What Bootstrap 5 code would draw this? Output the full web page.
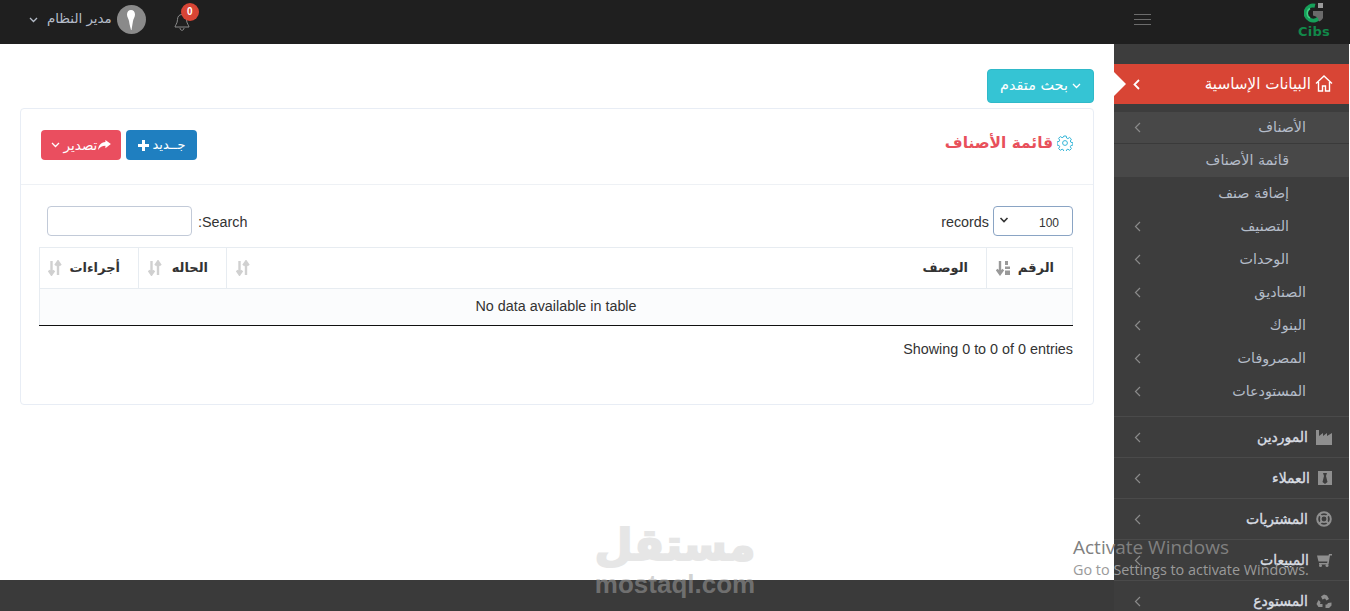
<!DOCTYPE html>
<html lang="ar">
<head>
<meta charset="utf-8">
<title>قائمة الأصناف</title>
<link href="https://cdn.jsdelivr.net/npm/bootstrap@5.3.0/dist/css/bootstrap.min.css" rel="stylesheet">
<style>
html,body{height:611px;overflow:hidden;background:#fff}
body{font-family:"DejaVu Sans","Liberation Sans",sans-serif;font-size:13px;color:#333;position:relative}
.lat{font-family:"Liberation Sans",sans-serif;font-size:14.35px;color:#333}
.topbar{height:44px;background:#1f1f1f;padding-bottom:5px}
.user-area{padding-left:29px;width:210px}
.user-name{color:#b4bcc8;font-size:13.4px;margin:0 5px 0 9px}
.avatar{width:29px;height:29px;border-radius:50%;background:#8a8a8a}
.bell-wrap{position:relative;width:16px;height:18px;margin-left:28px;top:2px}
.bell-count{position:absolute;left:7px;top:-10px;width:18px;height:18px;border-radius:50%;background:#d84535;color:#fff;font:700 10px/18px "Liberation Sans",sans-serif;text-align:center}
.top-right{width:236px;padding:0 19px 0 20px}
.burger{width:17px}
.burger i{display:block;height:1px;background:#6c6c6c;margin-bottom:4px}
.logo-box{width:34px;text-align:center;line-height:1}
.logo-word{font:700 13px/11px "DejaVu Sans",sans-serif;color:#12884a;letter-spacing:.2px;display:block;margin-top:3px}
.body-row{height:567px}
.content-col{width:1114px;flex:0 0 1114px}
.page-area{height:536px;padding:25px 20px 0}
.page-foot{height:31px;background:#3a3a3a}
.btn-adv{background:#35c4d4;border:1px solid #2fb9c9;color:#fff;width:107px;height:34px;font-size:14.4px;padding:0;border-radius:4px}
.sheet{margin-top:5px;height:297px;border:1px solid #e8edf5;border-radius:4px}
.sheet-head{height:76px;border-bottom:1px solid #eef1f5;padding:21px 20px 0}
.act-btn{height:30px;border:0;border-radius:4px;color:#fff;font-size:13px;padding:0;display:inline-flex;align-items:center;justify-content:center;gap:4px}
.act-red{width:80px;background:#ea4e5f;font-size:13.5px}
.act-blue{width:71px;background:#1f7fc0;margin-left:5px}
.arrow-over{margin-left:-3px}
.sheet-title{color:#e8505b;font-weight:700;font-size:15.4px;margin-top:2px;margin-right:4px}
.ctrl-row{padding:21px 20px 0 26px;height:62px}
.ctrl-label{margin-top:6px}
.search-label{margin-left:6px}
.txt-box{width:145px;height:30px;border:1px solid #c2cad8;border-radius:4px;background:#fff}
.sel-box{width:80px;height:30px;border:1px solid #8aa4c4;border-radius:4px;padding:0 13px 0 5px;font:12px/33px "Liberation Sans",sans-serif;color:#333}
.grid-wrap{margin:0 20px 0 18px}
.grid{width:1033px;table-layout:fixed;border-collapse:collapse;direction:rtl;margin:0}
.grid th{height:41px;border:1px solid #e7ecf1;font-size:13px;font-weight:700;color:#333;padding:0 18px 0 9px;white-space:nowrap}
.grid th.th-first{padding:0 18px 0 9px}
.grid th.th-last{padding:0 18px 0 8px}
.grid td{height:37px;text-align:center;background:#fbfcfd;border-left:1px solid #e7ecf1;border-right:1px solid #e7ecf1;border-bottom:1px solid #111;padding:0}
.sort-ic{display:block}
.info-line{padding:13px 20px 0 0;text-align:right}
.side{width:235px;flex:0 0 235px;background:#3d3d3d;padding-top:20px}
.s-active{height:40px;background:#d84535;color:#fff;font-size:15.2px;position:relative;padding:0 16px 0 19px}
.s-active::before{content:"";position:absolute;left:0;top:8px;border-left:12px solid #fff;border-top:12px solid transparent;border-bottom:12px solid transparent}
.s-sub{margin-top:8px;padding-bottom:8px;border-bottom:1px solid #4a4a4a}
.s-sub-row{height:33px;color:#b4bcc8;font-size:14.3px;padding:0 43px 0 20px}
.s-sub-row.s-l2{padding-right:60px}
.s-first{background:#484848;border-bottom:1px solid #3a3a3a;height:32px}
.s-cur{background:#484848}
.s-main{height:41px;border-bottom:1px solid #4a4a4a;color:#d9dde3;font-size:14px;padding:0 17px 0 20px;-webkit-text-stroke:.35px #d9dde3}
.s-main svg.ic{margin-left:8px}
.wm{position:absolute;left:594px;top:518px;width:162px;text-align:center;pointer-events:none}
.wm-ar{font:700 44px/54px "DejaVu Sans",sans-serif;display:block;color:#e6e6e6;-webkit-text-stroke:2px #e6e6e6}
.wm-en{font:700 26px/24px "Liberation Sans",sans-serif;display:block;color:rgba(165,165,165,.5)}
.win-mark{position:absolute;left:1073px;top:535px;font-family:"Open Sans",sans-serif;color:#808080;pointer-events:none;white-space:nowrap}
.win-a{font-size:19px;line-height:25px}
.win-b{font-size:14.4px;line-height:20px;color:#9a9a9a}
</style>
</head>
<body>
<header class="topbar d-flex align-items-center justify-content-between">
  <div class="user-area d-flex align-items-center">
    <svg width="9" height="6" viewBox="0 0 9 6"><path d="M1 1l3.500 3.500L8 1" fill="none" stroke="#b4bcc8" stroke-width="1.300"/></svg>
    <span class="user-name">مدير النظام</span>
    <span class="avatar d-flex align-items-center justify-content-center">
      <svg width="10" height="20" viewBox="0 0 10 20"><path d="M5 0c2.500 0 4 1.800 4 4.500 0 2.500-1.500 4-2 6.500L5.500 20 5 20 3.500 14 3 11C2.500 8.500 1 7 1 4.500 1 1.800 2.500 0 5 0z" fill="#fff"/></svg>
    </span>
    <span class="bell-wrap">
      <svg width="16" height="18" viewBox="0 0 16 18" class="d-block"><path d="M8 1.500c-3 0-4.500 2.300-4.500 5 0 4-2.500 6-2.500 7.500h14c0-1.500-2.500-3.500-2.500-7.500 0-2.700-1.500-5-4.500-5zM6 15c0 1.500 1 2.300 2 2.300s2-.8 2-2.300" fill="none" stroke="#8b8b8b" stroke-width="1"/></svg>
      <span class="bell-count">0</span>
    </span>
  </div>
  <div class="top-right d-flex align-items-center justify-content-between">
    <div class="burger"><i></i><i></i><i class="mb-0"></i></div>
    <div class="logo-box">
      <svg width="20" height="20" viewBox="0 0 20 20" class="d-block mx-auto"><path d="M11 2.800A7.500 7.500 0 1 0 15.500 14" fill="none" stroke="#16a05a" stroke-width="4"/><path d="M6 5.500A5.500 5.500 0 0 0 6 15" fill="none" stroke="#3fd083" stroke-width="1.500"/><rect x="14" y="0" width="5" height="5" fill="#9a9a9a"/><path d="M9 8h10v7c-1 2-2.500 3-4 3.500-.5-3-1.500-5-6-6z" fill="#6a6a6a"/></svg>
      <span class="logo-word">Cibs</span>
    </div>
  </div>
</header>

<div class="body-row d-flex">
  <div class="content-col d-flex flex-column">
    <main class="page-area">
      <div class="d-flex justify-content-end">
        <button class="btn-adv d-inline-flex align-items-center justify-content-center gap-1" type="button">
          <span>بحث متقدم</span>
          <svg width="9" height="6" viewBox="0 0 9 6"><path d="M1 1l3.500 3.500L8 1" fill="none" stroke="#fff" stroke-width="1.300"/></svg>
        </button>
      </div>
      <section class="sheet">
        <div class="sheet-head d-flex justify-content-between align-items-start">
          <div class="d-flex">
            <button class="act-btn act-red" type="button">
              <svg width="9" height="6" viewBox="0 0 9 6"><path d="M1 1l3.500 3.500L8 1" fill="none" stroke="#fff" stroke-width="1.300"/></svg>
              <span>تصدير</span>
              <svg width="13" height="10" viewBox="0 0 14 11" class="arrow-over"><path d="M8 0l6 4.500L8 9V6.300C4.500 6.300 2 7.500 0 11c.3-5 3-8.200 8-8.700z" fill="#fff"/></svg>
            </button>
            <button class="act-btn act-blue" type="button">
              <svg width="11" height="11" viewBox="0 0 11 11"><path d="M4 0h3v4h4v3H7v4H4V7H0V4h4z" fill="#fff"/></svg>
              <span>جــديد</span>
            </button>
          </div>
          <div class="d-flex align-items-center">
            <span class="sheet-title">قائمة الأصناف</span>
            <svg width="16" height="16" viewBox="0 0 16 16"><g fill="none" stroke="#35b6d8" stroke-width="1"><circle cx="8" cy="8" r="2.400"/><path d="M6.800 1h2.400l.4 2 1.300.6 1.800-1.100 1.700 1.700-1.100 1.800.6 1.300 2 .4v2.400l-2 .4-.6 1.300 1.100 1.800-1.700 1.700-1.800-1.100-1.300.6-.4 2H6.800l-.4-2-1.300-.6-1.800 1.100-1.700-1.700 1.100-1.800-.6-1.300-2-.4V6.800l2-.4.6-1.300-1.100-1.800 1.700-1.700 1.800 1.100 1.300-.6z"/></g></svg>
          </div>
        </div>
        <div class="ctrl-row d-flex justify-content-between">
          <div class="d-flex lat">
            <div class="txt-box"></div>
            <span class="ctrl-label search-label">:Search</span>
          </div>
          <div class="d-flex lat">
            <span class="me-1 ctrl-label">records</span>
            <div class="sel-box d-flex justify-content-between">
              <svg width="10" height="28" viewBox="0 0 10 28"><path d="M1.500 11l3.500 3.500L8.500 11" fill="none" stroke="#333" stroke-width="1.600"/></svg>
              <span>100</span>
            </div>
          </div>
        </div>
        <div class="grid-wrap">
          <table class="grid">
            <colgroup><col style="width:86px"><col style="width:760px"><col style="width:88px"><col style="width:99px"></colgroup>
            <thead>
              <tr>
                <th class="th-first"><div class="d-flex justify-content-between align-items-center"><span>الرقم</span><svg width="15" height="16" viewBox="0 0 15 16" class="sort-ic"><path d="M4 1v12M.8 9.500L4 14l3.200-4.500" fill="none" stroke="#999" stroke-width="2.400"/><path d="M9 1h3v4H9zM9 6.500h5V9H9zM9 10.500h5V15H9z" fill="#999"/></svg></div></th>
                <th><div class="d-flex justify-content-between align-items-center"><span>الوصف</span><svg width="14" height="16" viewBox="0 0 14 16" class="sort-ic"><path d="M3.500 1v13M.8 10.500L3.500 14.500l2.700-4M10 15V2M7.300 5.500L10 1.500l2.700 4" fill="none" stroke="#d0d0d0" stroke-width="2.400"/></svg></div></th>
                <th><div class="d-flex justify-content-between align-items-center"><span>الحاله</span><svg width="14" height="16" viewBox="0 0 14 16" class="sort-ic"><path d="M3.500 1v13M.8 10.500L3.500 14.500l2.700-4M10 15V2M7.300 5.500L10 1.500l2.700 4" fill="none" stroke="#d0d0d0" stroke-width="2.400"/></svg></div></th>
                <th class="th-last"><div class="d-flex justify-content-between align-items-center"><span>أجراءات</span><svg width="14" height="16" viewBox="0 0 14 16" class="sort-ic"><path d="M3.500 1v13M.8 10.500L3.500 14.500l2.700-4M10 15V2M7.300 5.500L10 1.500l2.700 4" fill="none" stroke="#d0d0d0" stroke-width="2.400"/></svg></div></th>
              </tr>
            </thead>
            <tbody><tr><td colspan="4" class="lat">No data available in table</td></tr></tbody>
          </table>
        </div>
        <div class="info-line lat">Showing 0 to 0 of 0 entries</div>
      </section>
    </main>
    <div class="page-foot"></div>
  </div>

  <nav class="side" dir="rtl">
    <div class="s-active d-flex align-items-center justify-content-between">
      <span class="d-flex align-items-center">
        <svg width="18" height="17" viewBox="0 0 18 17" class="ms-1"><path d="M1 8.500L9 1l8 7.500M3.500 7v9h4v-5h3v5h4V7" fill="none" stroke="#fff" stroke-width="1.400"/></svg>
        <span>البيانات الإساسية</span>
      </span>
      <svg width="7" height="11" viewBox="0 0 7 11"><path d="M6 1L1.500 5.500 6 10" fill="none" stroke="#fff" stroke-width="1.800"/></svg>
    </div>
    <div class="s-sub">
      <div class="s-sub-row s-first d-flex align-items-center justify-content-between"><span>الأصناف</span><svg width="7" height="11" viewBox="0 0 7 11"><path d="M6 1L1.500 5.500 6 10" fill="none" stroke="#8a8a8a" stroke-width="1.200"/></svg></div>
      <div class="s-sub-row s-l2 s-cur d-flex align-items-center"><span>قائمة الأصناف</span></div>
      <div class="s-sub-row s-l2 d-flex align-items-center"><span>إضافة صنف</span></div>
      <div class="s-sub-row s-l2 d-flex align-items-center justify-content-between"><span>التصنيف</span><svg width="7" height="11" viewBox="0 0 7 11"><path d="M6 1L1.500 5.500 6 10" fill="none" stroke="#8a8a8a" stroke-width="1.200"/></svg></div>
      <div class="s-sub-row s-l2 d-flex align-items-center justify-content-between"><span>الوحدات</span><svg width="7" height="11" viewBox="0 0 7 11"><path d="M6 1L1.500 5.500 6 10" fill="none" stroke="#8a8a8a" stroke-width="1.200"/></svg></div>
      <div class="s-sub-row d-flex align-items-center justify-content-between"><span>الصناديق</span><svg width="7" height="11" viewBox="0 0 7 11"><path d="M6 1L1.500 5.500 6 10" fill="none" stroke="#8a8a8a" stroke-width="1.200"/></svg></div>
      <div class="s-sub-row d-flex align-items-center justify-content-between"><span>البنوك</span><svg width="7" height="11" viewBox="0 0 7 11"><path d="M6 1L1.500 5.500 6 10" fill="none" stroke="#8a8a8a" stroke-width="1.200"/></svg></div>
      <div class="s-sub-row d-flex align-items-center justify-content-between"><span>المصروفات</span><svg width="7" height="11" viewBox="0 0 7 11"><path d="M6 1L1.500 5.500 6 10" fill="none" stroke="#8a8a8a" stroke-width="1.200"/></svg></div>
      <div class="s-sub-row d-flex align-items-center justify-content-between"><span>المستودعات</span><svg width="7" height="11" viewBox="0 0 7 11"><path d="M6 1L1.500 5.500 6 10" fill="none" stroke="#8a8a8a" stroke-width="1.200"/></svg></div>
    </div>
    <div class="s-main d-flex align-items-center justify-content-between">
      <span class="d-flex align-items-center"><svg class="ic" width="16" height="15" viewBox="0 0 16 15"><path d="M0 0h3v6l4-3v3l4-3v3l5-3v12H0z" fill="#8f8f8f"/></svg><span>الموردين</span></span>
      <svg width="7" height="11" viewBox="0 0 7 11"><path d="M6 1L1.500 5.500 6 10" fill="none" stroke="#8a8a8a" stroke-width="1.200"/></svg>
    </div>
    <div class="s-main d-flex align-items-center justify-content-between">
      <span class="d-flex align-items-center"><svg class="ic" width="14" height="14" viewBox="0 0 14 14"><rect width="14" height="14" fill="#8f8f8f"/><path d="M5 2h4L8 5l1.500 6L7 13l-2.500-2L6 5z" fill="#3d3d3d"/></svg><span>العملاء</span></span>
      <svg width="7" height="11" viewBox="0 0 7 11"><path d="M6 1L1.500 5.500 6 10" fill="none" stroke="#8a8a8a" stroke-width="1.200"/></svg>
    </div>
    <div class="s-main d-flex align-items-center justify-content-between">
      <span class="d-flex align-items-center"><svg class="ic" width="16" height="16" viewBox="0 0 16 16"><circle cx="8" cy="8" r="6.800" fill="none" stroke="#8f8f8f" stroke-width="2"/><circle cx="8" cy="8" r="3.200" fill="none" stroke="#8f8f8f" stroke-width="1.500"/><path d="M3 3l3 3M13 3l-3 3M3 13l3-3M13 13l-3-3" stroke="#8f8f8f" stroke-width="2"/></svg><span>المشتريات</span></span>
      <svg width="7" height="11" viewBox="0 0 7 11"><path d="M6 1L1.500 5.500 6 10" fill="none" stroke="#8a8a8a" stroke-width="1.200"/></svg>
    </div>
    <div class="s-main d-flex align-items-center justify-content-between">
      <span class="d-flex align-items-center"><svg class="ic" width="15" height="14" viewBox="0 0 15 14"><path d="M15 1h-3l-.5 1.500H0l1.500 6h9l-.4 1.500H2v1.500h9.500L13 2.500h2z" fill="#8f8f8f"/><circle cx="3.500" cy="12.500" r="1.500" fill="#8f8f8f"/><circle cx="10" cy="12.500" r="1.500" fill="#8f8f8f"/></svg><span>المبيعات</span></span>
      <svg width="7" height="11" viewBox="0 0 7 11"><path d="M6 1L1.500 5.500 6 10" fill="none" stroke="#8a8a8a" stroke-width="1.200"/></svg>
    </div>
    <div class="s-main d-flex align-items-center justify-content-between">
      <span class="d-flex align-items-center"><svg class="ic" width="16" height="15" viewBox="0 0 16 15"><path d="M8 .500L5 2.500l1.500 3 2.500-1 1.500 2L13 5 11 1.500zM2.500 6L.5 10l2 3h4v-3H4l.5-2zM15.500 8.500l-3.500.5-1 1.500h-1.500V14h3.500l2.500-2.500z" fill="#8f8f8f"/></svg><span>المستودع</span></span>
      <svg width="7" height="11" viewBox="0 0 7 11"><path d="M6 1L1.500 5.500 6 10" fill="none" stroke="#8a8a8a" stroke-width="1.200"/></svg>
    </div>
  </nav>
</div>

<div class="wm"><span class="wm-ar">مستقل</span><span class="wm-en">mostaql.com</span></div>
<div class="win-mark"><div class="win-a">Activate Windows</div><div class="win-b">Go to Settings to activate Windows.</div></div>
</body>
</html>
